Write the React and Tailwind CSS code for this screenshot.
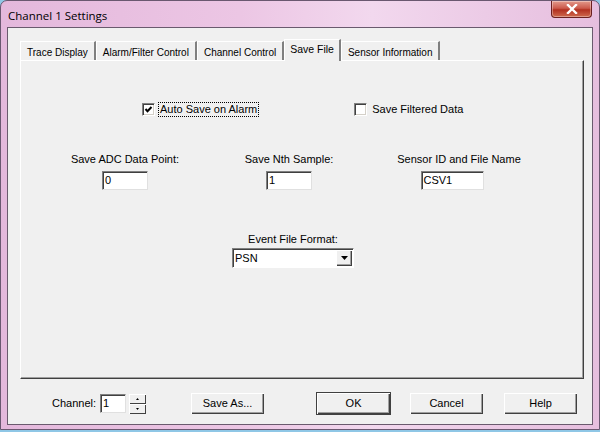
import { useState } from "react";

const ui = { fontFamily: '"Liberation Sans", Arial, sans-serif' };

function Tab({ label, active }) {
  if (active) {
    return (
      <div className="relative z-10 -mb-px h-[22px] px-[5px] pt-[2px] bg-[#f0f0f0] border-t border-l border-white border-r-2 border-r-[#808080] text-[10.5px] text-black">
        {label}
      </div>
    );
  }
  return (
    <div className="h-[19px] px-[6px] pt-[3px] bg-[#f0f0f0] border-t border-l border-white border-r-2 border-r-[#808080] text-[10px] text-black">
      {label}
    </div>
  );
}

function Field({ value, w = "w-[46px]" }) {
  return (
    <div
      className={`${w} h-[19px] bg-white border-t border-l border-[#808080] border-b border-r border-b-[#e0e0e0] border-r-[#e0e0e0] px-[2px] text-[11px] leading-[17px] shadow-[inset_1px_1px_0_#404040]`}
    >
      {value}
    </div>
  );
}

function Button({ label, isDefault }) {
  return (
    <button
      type="button"
      className={`w-[75px] h-[23px] bg-[#f0f0f0] text-[11px] text-black border ${
        isDefault ? "border-[#404040]" : "border-[#f0f0f0]"
      } shadow-[inset_1px_1px_0_#ffffff,inset_-1px_-1px_0_#404040,inset_-2px_-2px_0_#a0a0a0]`}
    >
      {label}
    </button>
  );
}

function Checkbox({ checked }) {
  return (
    <div className="w-[13px] h-[13px] bg-white border-t border-l border-[#808080] border-b border-r border-b-white border-r-white shadow-[inset_1px_1px_0_#404040,inset_-1px_-1px_0_#d4d0c8] flex items-center justify-center">
      {checked && (
        <svg width="9" height="9" viewBox="0 0 9 9">
          <path d="M1.5 4 L3.5 6.2 L7.5 2" stroke="#000" strokeWidth="2" fill="none" />
        </svg>
      )}
    </div>
  );
}

export default function App() {
  const [channel] = useState(1);
  return (
    <div className="w-[600px] h-[432px] bg-[#8fc7e6] overflow-hidden" style={ui}>
      <div className="w-[600px] h-[430px] rounded-t-[7px] border border-[#6a5870] bg-[linear-gradient(90deg,#e4b8dc_0%,#ecc6e4_40%,#f2d8ee_62%,#e6bede_100%)] flex flex-col">
        {/* title bar */}
        <div className="h-[26px] flex items-start justify-between pl-[7px] pr-[7px]">
          <div
            className="pt-[6px] text-[11.5px] text-black"
            style={{ fontFamily: '"Open Sans", "Liberation Sans", sans-serif' }}
          >
            Channel 1 Settings
          </div>
          <div className="w-[41px] h-[17px] mt-0 rounded-b-[4px] border border-[#6b2020] border-t-0 bg-[linear-gradient(180deg,#e39a8c_0%,#cc5a4c_45%,#b23020_55%,#cf6a4e_100%)] flex items-center justify-center shadow-[inset_0_0_0_1px_rgba(255,255,255,0.35)]">
            <svg width="12" height="10" viewBox="0 0 12 10">
              <path d="M2 1 L10 9 M10 1 L2 9" stroke="#ffffff" strokeWidth="2.4" strokeLinecap="square" />
            </svg>
          </div>
        </div>

        {/* client area */}
        <div className="mx-[6px] mb-[4px] flex-1 border border-[#6a5a6e] bg-[#f0f0f0] flex flex-col">
          <div className="pt-[11px] pl-[12px] pr-[8px]">
            <div className="flex items-end">
              <Tab label="Trace Display" />
              <Tab label="Alarm/Filter Control" />
              <Tab label="Channel Control" />
              <Tab label="Save File" active />
              <Tab label="Sensor Information" />
            </div>

            {/* tab panel */}
            <div className="h-[319px] border-t border-l border-white border-r border-b border-r-[#404040] border-b-[#404040] shadow-[inset_-1px_-1px_0_#a0a0a0] text-[11px] text-black">
              <div className="flex items-center pt-[42px] pl-[121px]">
                <Checkbox checked />
                <span className="ml-[4px] px-[1px] outline outline-1 outline-dotted outline-black leading-[13px]">
                  Auto Save on Alarm
                </span>
                <div className="ml-[96px]">
                  <Checkbox />
                </div>
                <span className="ml-[5px] leading-[13px]">Save Filtered Data</span>
              </div>

              <div className="grid grid-cols-[160px_168px_172px] pl-[24px] pt-[35px]">
                <div className="flex flex-col items-center">
                  <span className="h-[14px]">Save ADC Data Point:</span>
                  <div className="mt-[6px]">
                    <Field value="0" />
                  </div>
                </div>
                <div className="flex flex-col items-center">
                  <span className="h-[14px]">Save Nth Sample:</span>
                  <div className="mt-[6px]">
                    <Field value="1" />
                  </div>
                </div>
                <div className="flex flex-col items-center">
                  <span className="h-[14px]">Sensor ID and File Name</span>
                  <div className="mt-[6px] mr-[14px]">
                    <Field value="CSV1" w="w-[63px]" />
                  </div>
                </div>
              </div>

              <div className="w-[160px] ml-[192px] mt-[41px] flex flex-col items-center">
                <span className="h-[14px]">Event File Format:</span>
                <div className="mt-[3px] w-[122px] h-[20px] bg-white border-t border-l border-[#808080] border-b border-r border-b-white border-r-white shadow-[inset_1px_1px_0_#404040] flex items-center justify-between pl-[2px] pr-[1px]">
                  <span>PSN</span>
                  <div className="w-[16px] h-[16px] bg-[#f0f0f0] shadow-[inset_1px_1px_0_#ffffff,inset_-1px_-1px_0_#404040,inset_-2px_-2px_0_#a0a0a0] flex items-center justify-center">
                    <svg width="7" height="4" viewBox="0 0 7 4">
                      <path d="M0 0 H7 L3.5 4 Z" fill="#000" />
                    </svg>
                  </div>
                </div>
              </div>
            </div>
          </div>

          {/* bottom row */}
          <div className="flex items-center mt-[13px] pl-[44px] text-[11px] text-black">
            <span>Channel:</span>
            <div className="ml-[4px]">
              <Field value={String(channel)} w="w-[26px]" />
            </div>
            <div className="ml-[3px] flex flex-col">
              <div className="w-[17px] h-[10px] bg-[#f0f0f0] shadow-[inset_1px_1px_0_#ffffff,inset_-1px_-1px_0_#404040] flex items-center justify-center">
                <svg width="3" height="2" viewBox="0 0 3 2">
                  <path d="M0 2 H3 L1.5 0 Z" fill="#000" />
                </svg>
              </div>
              <div className="w-[17px] h-[10px] bg-[#f0f0f0] shadow-[inset_1px_1px_0_#ffffff,inset_-1px_-1px_0_#404040] flex items-center justify-center">
                <svg width="3" height="2" viewBox="0 0 3 2">
                  <path d="M0 0 H3 L1.5 2 Z" fill="#000" />
                </svg>
              </div>
            </div>
            <div className="ml-[44px]">
              <Button label="Save As..." />
            </div>
            <div className="ml-[51px]">
              <Button label="OK" isDefault />
            </div>
            <div className="ml-[18px]">
              <Button label="Cancel" />
            </div>
            <div className="ml-[19px]">
              <Button label="Help" />
            </div>
          </div>
        </div>
      </div>
    </div>
  );
}
